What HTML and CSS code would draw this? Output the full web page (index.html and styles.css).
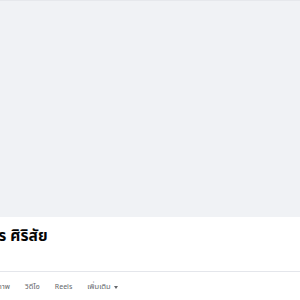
FILE: index.html
```html
<!DOCTYPE html>
<html lang="th">
<head>
<meta charset="utf-8">
<link rel="stylesheet" href="styles.css">
</head>
<body>
<div class="page">
  <div class="cover"></div>
  <div class="header">
    <h1 class="name">ชนินทร ศิริสัย</h1>
    <div class="sub">เพื่อน</div>
  </div>
  <div class="divider"></div>
  <nav class="tabs">
    <span class="tab">รูปภาพ</span>
    <span class="tab">วิดีโอ</span>
    <span class="tab latin">Reels</span>
    <span class="tab more">เพิ่มเติม <span class="caret"></span></span>
  </nav>
</div>
</body>
</html>
```
FILE: styles.css
```css
html, body {
  margin: 0;
  padding: 0;
  background: #ffffff;
}
.page {
  width: 300px;
  height: 300px;
  overflow: hidden;
  font-family: "Noto Sans Thai", "Noto Sans", "Liberation Sans", sans-serif;
}
.cover {
  height: 216px;
  background: #f0f2f5;
  border-top: 1px solid #e6e8ec;
}
.header {
  padding-top: 9px;
  height: 45px;
}
.name {
  margin: 0 0 0 -41px;
  font-size: 15.5px;
  line-height: 22px;
  font-weight: 700;
  color: #050505;
  white-space: nowrap;
}
.sub {
  margin-left: -24px;
  font-size: 7px;
  line-height: 10px;
  color: #8fd3ef;
  white-space: nowrap;
}
.divider {
  height: 1px;
  background: #e4e6eb;
}
.tabs {
  display: flex;
  gap: 15px;
  margin-left: -11px;
  padding-top: 9px;
  font-size: 7.5px;
  line-height: 12px;
  color: #65676b;
  white-space: nowrap;
}
.tab {
  display: flex;
  align-items: center;
  gap: 3px;
}
.latin {
  font-size: 7px;
}
.caret {
  display: inline-block;
  width: 0;
  height: 0;
  border-left: 2.5px solid transparent;
  border-right: 2.5px solid transparent;
  border-top: 3px solid #65676b;
}
```
